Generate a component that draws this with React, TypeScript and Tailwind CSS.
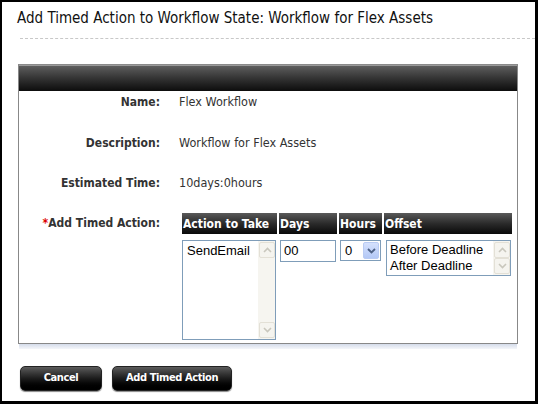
import React from "react";

const font = "font-['DejaVu_Sans_Condensed','DejaVu_Sans',sans-serif]";
const ctl = "font-['Liberation_Sans',Arial,sans-serif]";

const ScrollBtn = ({ up }: { up?: boolean }) => (
  <div className="flex h-[16px] w-[16px] items-center justify-center rounded-[2px] border border-[#e3e0d6] bg-[#f5f4ef]">
    <svg width="9" height="6" viewBox="0 0 9 6">
      <path
        d={up ? "M1 5 L4.5 1.5 L8 5" : "M1 1 L4.5 4.5 L8 1"}
        fill="none"
        stroke="#c9c7bd"
        strokeWidth="1.6"
      />
    </svg>
  </div>
);

const Scrollbar = () => (
  <div className="flex w-[17px] shrink-0 flex-col justify-between bg-[#f6f5f0] p-px">
    <ScrollBtn up />
    <ScrollBtn />
  </div>
);

const Row = ({ label, children, className = "" }: { label: React.ReactNode; children: React.ReactNode; className?: string }) => (
  <div className={`flex ${className}`}>
    <div className="w-[141px] shrink-0 whitespace-nowrap text-right text-[12px] leading-[16px] font-bold text-[#333]">{label}</div>
    <div className="ml-[19px] whitespace-nowrap text-[12.5px] leading-[16px] text-[#333]">{children}</div>
  </div>
);

const Th = ({ children, className = "" }: { children: React.ReactNode; className?: string }) => (
  <div className={`flex h-[21px] items-center whitespace-nowrap bg-gradient-to-b from-[#5a5a5a] via-[#2b2b2b] to-[#0a0a0a] pl-px text-[12px] font-bold text-white ${className}`}>
    {children}
  </div>
);

const BlackButton = ({ children, className = "" }: { children: React.ReactNode; className?: string }) => (
  <button className={`flex h-[25px] items-center justify-center whitespace-nowrap rounded-[5px] border border-[#222] bg-gradient-to-b from-[#5c5c5c] via-[#1c1c1c] to-[#000] text-[11px] font-bold tracking-[-0.4px] text-white shadow-[0_1px_1px_#888] ${className}`}>
    {children}
  </button>
);

export default function App() {
  return (
    <div className={`h-[404px] w-[538px] overflow-hidden border-t-2 border-l-2 border-r-[3px] border-b-[3px] border-black bg-white ${font}`}>
      <h1 className="ml-[15px] mt-[6px] whitespace-nowrap text-[15px] leading-[20px] text-[#111]">
        Add Timed Action to Workflow State: Workflow for Flex Assets
      </h1>
      <div className="ml-[18px] mt-[10px] border-t border-dashed border-[#c8c8c8]" />

      <div className="ml-[16px] mt-[25px] w-[500px]">
        <div className="border border-[#888] border-t-[#8a8a8a]">
          <div className="h-[26px] border-t border-[#9a9a9a] bg-gradient-to-b from-[#5e5e5e] via-[#333] to-[#0d0d0d]" />
          <div className="pb-[3px] pt-[3px]">
            <Row label="Name:">Flex Workflow</Row>
            <Row label="Description:" className="mt-[25px]">Workflow for Flex Assets</Row>
            <Row label="Estimated Time:" className="mt-[24px]">10days:0hours</Row>
            <div className="mt-[22px] flex">
              <div className="w-[141px] shrink-0 whitespace-nowrap pt-[2px] text-right text-[12px] leading-[16px] font-bold text-[#333]">
                <span className="text-[#d00]">*</span>Add Timed Action:
              </div>
              <div className="ml-[22px] flex gap-[2px]">
                <div className="flex w-[95px] flex-col">
                  <Th>Action to Take</Th>
                  <div className="mt-[6px] flex h-[100px] w-[94px] border border-[#7f9db9] bg-white">
                    <div className={`flex-1 pl-[4px] pt-[2px] text-[13px] leading-[16px] text-black ${ctl}`}>SendEmail</div>
                    <Scrollbar />
                  </div>
                </div>
                <div className="flex w-[58px] flex-col">
                  <Th>Days</Th>
                  <div className={`ml-px mt-[6px] flex h-[22px] w-[56px] items-center border border-[#7f9db9] pl-[3px] text-[13px] text-black ${ctl}`}>
                    00
                  </div>
                </div>
                <div className="flex w-[43px] flex-col">
                  <Th>Hours</Th>
                  <div className={`ml-px mt-[6px] flex h-[21px] w-[41px] items-center border border-[#7f9db9] pl-[4px] text-[13px] text-black ${ctl}`}>
                    <span className="flex-1">0</span>
                    <div className="mr-px flex h-[17px] w-[16px] items-center justify-center rounded-[2px] border border-[#b9cbf3] bg-gradient-to-b from-[#d5e1fd] to-[#b3c8f6]">
                      <svg width="9" height="6" viewBox="0 0 9 6">
                        <path d="M1 1 L4.5 4.5 L8 1" fill="none" stroke="#4d6185" strokeWidth="1.8" />
                      </svg>
                    </div>
                  </div>
                </div>
                <div className="flex w-[128px] flex-col">
                  <Th>Offset</Th>
                  <div className="ml-[2px] mt-[6px] flex h-[36px] w-[125px] border border-[#7f9db9] bg-white">
                    <div className={`flex-1 whitespace-nowrap pl-[3px] pt-px text-[13px] leading-[16px] text-black ${ctl}`}>
                      <div>Before Deadline</div>
                      <div>After Deadline</div>
                    </div>
                    <Scrollbar />
                  </div>
                </div>
              </div>
            </div>
          </div>
        </div>
        <div className="mx-px h-[5px] bg-gradient-to-b from-[#d5dcea] to-[#f4f6fa]" />
      </div>

      <div className="ml-[18px] mt-[17px] flex gap-[10px]">
        <BlackButton className="w-[82px]">Cancel</BlackButton>
        <BlackButton className="w-[120px]">Add Timed Action</BlackButton>
      </div>
    </div>
  );
}
